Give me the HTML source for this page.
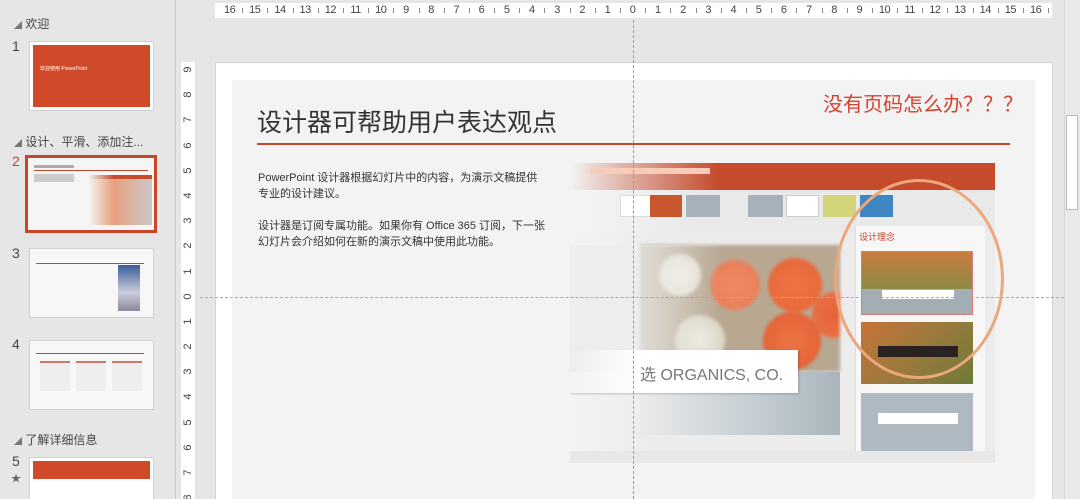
<!DOCTYPE html><html><head><meta charset="utf-8"><style>
*{margin:0;padding:0;box-sizing:border-box}
html,body{width:1080px;height:499px;overflow:hidden}
body{background:#e6e6e6;font-family:"Liberation Sans","Noto Sans CJK SC",sans-serif;position:relative}
.a{position:absolute}
.sec{font-size:12px;color:#444}
.num{font-size:14px;color:#444}
.th{position:absolute;left:29px;width:125px;height:70px;background:#fff;border:1px solid #d0d0d0;overflow:hidden}
.hr{display:flex;position:absolute;left:217px;top:3px;height:15px}
.hr span{width:25.2px;text-align:center;font-size:11px;line-height:15px;color:#444;position:relative;letter-spacing:-0.5px}
.hr span:after{content:"";position:absolute;right:-1px;top:5px;height:5px;border-left:1px solid #888}
.vr{position:absolute;left:182px;top:57px;width:13px}
.vr span{display:block;height:25.2px;font-size:11px;line-height:25.2px;text-align:center;color:#444;transform:rotate(-90deg)}
</style></head><body>
<div class="a" style="left:0;top:0;width:176px;height:499px;background:#e6e6e6;border-right:1px solid #c8c8c8"></div>
<div class="a sec" style="left:14px;top:15px"><span style="font-size:8px;color:#777">◢</span> 欢迎</div>
<div class="a num" style="left:12px;top:38px">1</div>
<div class="th" style="top:41px;padding:3px"><div style="background:#d04a2a;width:100%;height:100%;position:relative"><div class="a" style="left:7px;top:20px;color:#fff;font-size:5px">欢迎使用 PowerPoint</div></div></div>
<div class="a sec" style="left:14px;top:133px"><span style="font-size:8px;color:#777">◢</span> 设计、平滑、添加注...</div>
<div class="a num" style="left:12px;top:153px;color:#c0462a">2</div>
<div class="th" style="left:25px;top:155px;width:132px;height:78px;border:3px solid #c7462a;background:#f5f5f5">
 <div class="a" style="left:6px;top:7px;width:40px;height:3px;background:#aaa"></div>
 <div class="a" style="left:6px;top:12px;width:114px;height:1px;background:#c3462d"></div>
 <div class="a" style="left:6px;top:16px;width:40px;height:8px;background:#ccc"></div>
 <div class="a" style="left:60px;top:17px;width:64px;height:50px;background:linear-gradient(90deg,#f5f5f5,#e8a07e 40%,#c9c9c9)"></div>
 <div class="a" style="left:60px;top:17px;width:64px;height:4px;background:linear-gradient(90deg,#f5f5f5,#c64b2d 40%)"></div>
</div>
<div class="a num" style="left:12px;top:245px">3</div>
<div class="th" style="top:248px;background:#f7f7f7">
 <div class="a" style="left:6px;top:14px;width:108px;height:1px;background:#c3462d"></div>
 <div class="a" style="left:88px;top:16px;width:22px;height:46px;background:linear-gradient(#3a5d9a,#ccd 60%,#889)"></div>
</div>
<div class="a num" style="left:12px;top:336px">4</div>
<div class="th" style="top:340px;background:#f7f7f7">
 <div class="a" style="left:6px;top:12px;width:108px;height:1px;background:#c3462d"></div>
 <div class="a" style="left:10px;top:20px;width:30px;height:30px;background:#eee;border-top:2px solid #c76"></div>
 <div class="a" style="left:46px;top:20px;width:30px;height:30px;background:#eee;border-top:2px solid #c76"></div>
 <div class="a" style="left:82px;top:20px;width:30px;height:30px;background:#eee;border-top:2px solid #c76"></div>
</div>
<div class="a sec" style="left:14px;top:431px"><span style="font-size:8px;color:#777">◢</span> 了解详细信息</div>
<div class="a num" style="left:12px;top:453px">5</div>
<div class="a" style="left:11px;top:470px;font-size:10px;color:#666">★</div>
<div class="th" style="top:457px;height:50px;padding:3px"><div style="background:#d04a2a;height:18px"></div></div>
<div class="a" style="left:215px;top:3px;width:837px;height:15px;background:#fff"></div>
<div class="hr"><span>16</span><span>15</span><span>14</span><span>13</span><span>12</span><span>11</span><span>10</span><span>9</span><span>8</span><span>7</span><span>6</span><span>5</span><span>4</span><span>3</span><span>2</span><span>1</span><span>0</span><span>1</span><span>2</span><span>3</span><span>4</span><span>5</span><span>6</span><span>7</span><span>8</span><span>9</span><span>10</span><span>11</span><span>12</span><span>13</span><span>14</span><span>15</span><span>16</span></div>
<div class="a" style="left:181px;top:62px;width:14px;height:437px;background:#fff"></div>
<div class="vr"><span>9</span><span>8</span><span>7</span><span>6</span><span>5</span><span>4</span><span>3</span><span>2</span><span>1</span><span>0</span><span>1</span><span>2</span><span>3</span><span>4</span><span>5</span><span>6</span><span>7</span><span>8</span></div>
<div class="a" style="left:1064px;top:0;width:16px;height:499px;background:#e9e9e9;border-left:1px solid #d6d6d6"></div>
<div class="a" style="left:1066px;top:115px;width:12px;height:95px;background:#fff;border:1px solid #bbb"></div>
<div class="a" style="left:215px;top:62px;width:838px;height:440px;background:#fff;border:1px solid #d4d4d4"></div>
<div class="a" style="left:232px;top:80px;width:803px;height:420px;background:#f3f3f3"></div>
<div class="a" style="left:257px;top:103px;font-size:25px;color:#333">设计器可帮助用户表达观点</div>
<div class="a" style="left:823px;top:88px;font-size:20px;color:#d8402f">没有页码怎么办？？？</div>
<div class="a" style="left:257px;top:143px;width:753px;height:2px;background:#c3462d"></div>
<div class="a" style="left:258px;top:170px;width:290px;font-size:11px;line-height:16px;color:#333">PowerPoint 设计器根据幻灯片中的内容，为演示文稿提供专业的设计建议。<br><br>设计器是订阅专属功能。如果你有 Office 365 订阅，下一张幻灯片会介绍如何在新的演示文稿中使用此功能。</div>
<div class="a" style="left:570px;top:163px;width:425px;height:300px;overflow:hidden;background:linear-gradient(90deg,#f3f3f3,#ececec 20%)">
 <div class="a" style="left:0;top:0;width:425px;height:27px;background:linear-gradient(90deg,rgba(200,75,45,0) 0%,#c64b2d 35%)"></div>
 <div class="a" style="left:20px;top:5px;width:120px;height:6px;background:#f7cdb9"></div>
 <div class="a" style="left:0;top:27px;width:425px;height:42px;background:linear-gradient(90deg,#f3f3f3 5%,#e9e9e9 30%)"></div>
 <div class="a" style="left:50px;top:32px;width:32px;height:22px;background:#fff;border:1px solid #ddd"></div>
 <div class="a" style="left:80px;top:32px;width:32px;height:22px;background:#c9572e"></div>
 <div class="a" style="left:116px;top:32px;width:34px;height:22px;background:#a6b2bb"></div>
 <div class="a" style="left:178px;top:32px;width:35px;height:22px;background:#a6b2bb"></div>
 <div class="a" style="left:216px;top:32px;width:33px;height:22px;background:#fff;border:1px solid #ccc"></div>
 <div class="a" style="left:253px;top:32px;width:33px;height:22px;background:#d4d47a"></div>
 <div class="a" style="left:290px;top:32px;width:33px;height:22px;background:#3f86c3"></div>
 <div class="a" style="left:70px;top:82px;width:200px;height:127px;filter:blur(1.5px);background:
  radial-gradient(circle at 195px 70px,#e4643a 0,#e86e40 22px,rgba(0,0,0,0) 24px),
  radial-gradient(circle at 155px 40px,#ee7444 0,#e8693c 26px,rgba(0,0,0,0) 28px),
  radial-gradient(circle at 152px 96px,#ec7445 0,#e46438 28px,rgba(0,0,0,0) 30px),
  radial-gradient(circle at 95px 40px,#f08a63 0,#e9805a 24px,rgba(0,0,0,0) 26px),
  radial-gradient(circle at 40px 30px,#f2efe6 0,#e5dfd0 20px,rgba(0,0,0,0) 22px),
  radial-gradient(circle at 60px 95px,#eeeadf 0,#dcd5c5 24px,rgba(0,0,0,0) 26px),
  #b8a892"></div>
 <div class="a" style="left:0;top:82px;width:150px;height:127px;background:linear-gradient(90deg,#ededed 20%,rgba(237,237,237,0.6) 60%,rgba(237,237,237,0))"></div>
 <div class="a" style="left:70px;top:209px;width:200px;height:63px;background:linear-gradient(90deg,#eaeaea,#c3ccd2 60%,#a9b5bc)"></div>
 <div class="a" style="left:0;top:187px;width:228px;height:43px;background:linear-gradient(90deg,rgba(255,255,255,0),#fff 30%);box-shadow:1px 1px 2px rgba(0,0,0,.2)"></div>
 <div class="a" style="left:70px;top:198px;font-size:16px;color:#777">选 ORGANICS, CO.</div>
 <div class="a" style="left:285px;top:63px;width:130px;height:229px;background:#f7f7f7;border-left:1px solid #ddd"></div>
 <div class="a" style="left:289px;top:67px;font-size:9px;color:#c0462a">设计理念</div>
 <div class="a" style="left:291px;top:88px;width:112px;height:64px;background:linear-gradient(#c97c3e,#8b8a44 60%,#a3aeb4 60%);border:1px solid #d87c7c"></div>
 <div class="a" style="left:312px;top:127px;width:72px;height:9px;background:#fff"></div>
 <div class="a" style="left:291px;top:159px;width:112px;height:62px;background:linear-gradient(135deg,#c77338,#9b7a3d 50%,#6c7a38)"></div>
 <div class="a" style="left:308px;top:183px;width:80px;height:11px;background:#2a2220"></div>
 <div class="a" style="left:291px;top:230px;width:112px;height:62px;background:#aeb9c1"></div>
 <div class="a" style="left:308px;top:250px;width:80px;height:11px;background:#fff"></div>
 <div class="a" style="left:0;top:288px;width:425px;height:12px;background:#e8e8e8"></div>
</div>
<div class="a" style="left:834px;top:179px;width:170px;height:200px;border:3px solid #eda77d;border-radius:50%"></div>
<div class="a" style="left:633px;top:20px;width:0;height:479px;border-left:1px dashed #999"></div>
<div class="a" style="left:200px;top:297px;width:864px;height:0;border-top:1px dashed #aaa"></div>
</body></html>
